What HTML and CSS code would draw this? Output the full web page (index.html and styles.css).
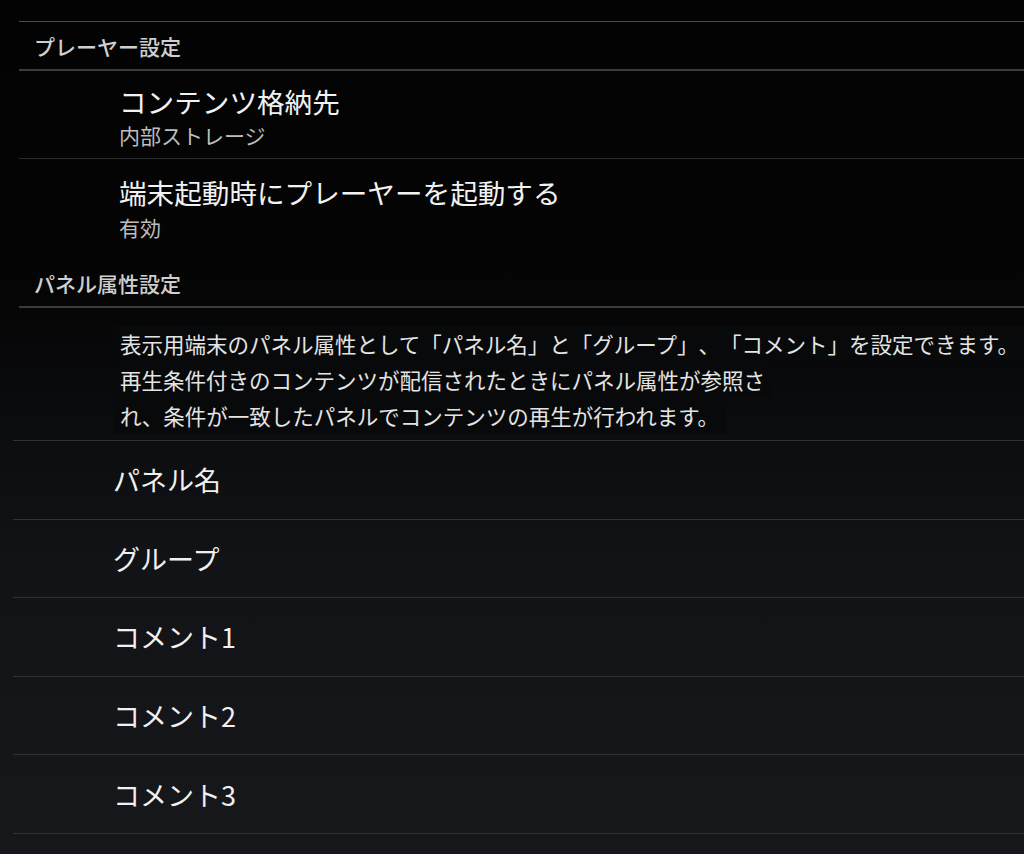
FILE: index.html
```html
<!DOCTYPE html>
<html lang="ja">
<head>
<meta charset="utf-8">
<link rel="stylesheet" href="styles.css">
</head>
<body>
<div class="screen">
  <div class="top-rule"></div>
  <section class="category">
    <div class="cat-title">プレーヤー設定</div>
    <div class="pref first divided">
      <div class="pref-title">コンテンツ格納先</div>
      <div class="pref-summary">内部ストレージ</div>
    </div>
    <div class="pref last">
      <div class="pref-title">端末起動時にプレーヤーを起動する</div>
      <div class="pref-summary">有効</div>
    </div>
  </section>
  <section class="category">
    <div class="cat-title">パネル属性設定</div>
    <div class="desc">
      <span class="desc-line">表示用端末のパネル属性として「パネル名」と「グループ」、「コメント」を設定できます。</span>
      <span class="desc-line">再生条件付きのコンテンツが配信されたときにパネル属性が参照さ</span>
      <span class="desc-line">れ、条件が一致したパネルでコンテンツの再生が行われます。</span>
    </div>
    <div class="single">パネル名</div>
    <div class="single">グループ</div>
    <div class="single">コメント1</div>
    <div class="single">コメント2</div>
    <div class="single">コメント3</div>
  </section>
</div>
</body>
</html>
```
FILE: styles.css
```css
html, body {
  margin: 0;
  padding: 0;
}
body {
  width: 1024px;
  height: 854px;
  overflow: hidden;
  background: linear-gradient(to bottom, #030303 0px, #050506 300px, #0b0c0e 420px, #111316 560px, #16181b 854px);
  font-family: "Noto Sans CJK JP", "Noto Sans", sans-serif;
  color: #eeeeee;
  text-spacing-trim: space-all;
}
.screen {
  padding-top: 21px;
  display: flex;
  flex-direction: column;
}
.top-rule {
  margin-left: 19px;
  height: 1px;
  background: #4a4a4a;
}
.category {
  display: flex;
  flex-direction: column;
}
.cat-title {
  margin-left: 19px;
  height: 47px;
  padding-left: 15px;
  display: flex;
  align-items: center;
  font-size: 21px;
  font-weight: 500;
  color: #cfcfcf;
  border-bottom: 2px solid #3b3b3b;
}
.category + .category .cat-title {
  height: 46px;
}
.pref {
  margin-left: 19px;
  padding-left: 100px;
  display: flex;
  flex-direction: column;
}
.pref.first {
  padding-top: 12px;
  box-sizing: border-box;
  height: 88px;
}
.pref.last {
  padding-top: 15px;
  height: 101px;
  box-sizing: border-box;
}
.pref.divided {
  border-bottom: 1px solid #2c2c2c;
}
.pref-title {
  font-size: 27.6px;
  line-height: 36px;
  color: #f2f2f2;
}
.pref-summary {
  font-size: 21px;
  line-height: 32px;
  color: #bdbdbd;
}
.pref.last .pref-summary {
  line-height: 34px;
}
.desc {
  margin-left: 13px;
  padding: 18px 0 0 100px;
  box-sizing: border-box;
  height: 133px;
  display: flex;
  flex-direction: column;
  align-items: flex-start;
  border-bottom: 1px solid #2f3133;
}
.desc-line {
  font-size: 21.5px;
  line-height: 36px;
  color: #e4e4e4;
  background: #08090a;
  padding: 0 8px 0 7px;
  white-space: nowrap;
}
.single {
  margin-left: 13px;
  padding-left: 100px;
  height: 77.6px;
  display: flex;
  align-items: center;
  font-size: 27px;
  color: #f0f0f0;
  border-bottom: 1px solid #2f3235;
}
```
